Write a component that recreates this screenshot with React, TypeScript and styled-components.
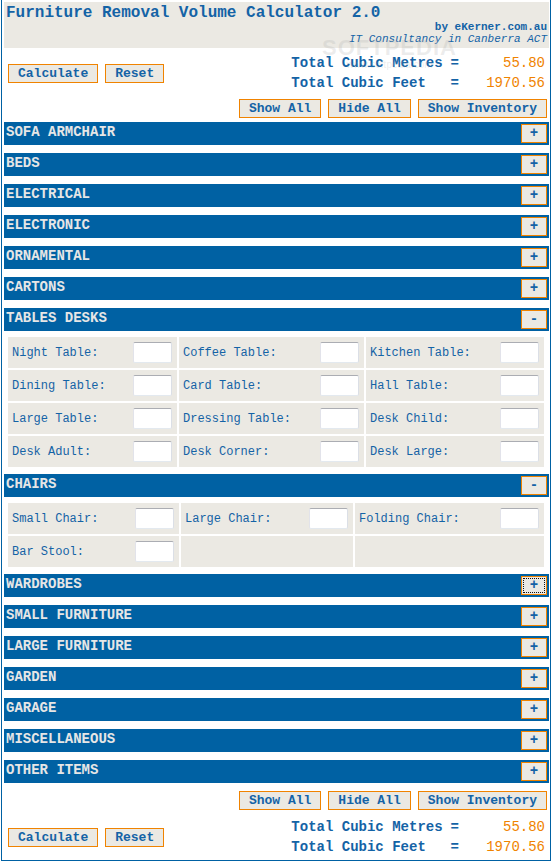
import React, { useState } from 'react'
import styled, { createGlobalStyle } from 'styled-components'

const BLUE = '#0061a3'
const TEXT = '#1463a6'
const PANEL = '#ebe9e3'
const ORANGE = '#f08300'

const GlobalStyle = createGlobalStyle`
  html, body {
    margin: 0;
    padding: 0;
    background: #fff;
  }
  body {
    font-family: "Liberation Mono", "DejaVu Sans Mono", monospace;
  }
`

interface Section {
  name: string
  open?: boolean
  focused?: boolean
  columns?: string
  items?: string[]
}

const sections: Section[] = [
  { name: 'SOFA ARMCHAIR' },
  { name: 'BEDS' },
  { name: 'ELECTRICAL' },
  { name: 'ELECTRONIC' },
  { name: 'ORNAMENTAL' },
  { name: 'CARTONS' },
  {
    name: 'TABLES DESKS',
    open: true,
    columns: '169px 185px 178px',
    items: [
      'Night Table:', 'Coffee Table:', 'Kitchen Table:',
      'Dining Table:', 'Card Table:', 'Hall Table:',
      'Large Table:', 'Dressing Table:', 'Desk Child:',
      'Desk Adult:', 'Desk Corner:', 'Desk Large:',
    ],
  },
  {
    name: 'CHAIRS',
    open: true,
    columns: '171px 172px 189px',
    items: ['Small Chair:', 'Large Chair:', 'Folding Chair:', 'Bar Stool:'],
  },
  { name: 'WARDROBES', focused: true },
  { name: 'SMALL FURNITURE' },
  { name: 'LARGE FURNITURE' },
  { name: 'GARDEN' },
  { name: 'GARAGE' },
  { name: 'MISCELLANEOUS' },
  { name: 'OTHER ITEMS' },
]

const Frame = styled.div`
  position: relative;
  width: 550px;
  margin-left: 1px;
  box-sizing: border-box;
  border: 1px solid ${BLUE};
  border-top: none;
  padding: 2px 1px 2px 2px;
`

const Header = styled.div`
  background: ${PANEL};
  padding: 3px 2px 2px 2px;
  height: 46px;
  box-sizing: border-box;
  color: ${TEXT};
`

const Title = styled.h1`
  margin: 0;
  font-size: 16px;
  line-height: 16px;
  font-weight: bold;
`

const Byline = styled.div<{ $italic?: boolean }>`
  text-align: right;
  font-size: 11px;
  line-height: ${(p) => (p.$italic ? '13px' : '12px')};
  font-weight: ${(p) => (p.$italic ? 'normal' : 'bold')};
  font-style: ${(p) => (p.$italic ? 'italic' : 'normal')};
`

// faint watermark laid over the header corner
const Watermark = styled.div`
  position: absolute;
  top: 37px;
  left: 320px;
  text-align: center;
  color: rgba(170, 170, 170, 0.22);
  font-family: "Liberation Sans", Arial, sans-serif;
  pointer-events: none;
`

const WatermarkBig = styled.div`
  font-size: 22px;
  line-height: 22px;
  font-weight: bold;
  letter-spacing: 1px;
`

const WatermarkSmall = styled.div`
  font-size: 10px;
  line-height: 12px;
`

const Summary = styled.div<{ $top: number; $bottom: number }>`
  display: flex;
  justify-content: space-between;
  align-items: center;
  padding: 0 4px;
  margin-top: ${(p) => p.$top}px;
  margin-bottom: ${(p) => p.$bottom}px;
`

const ButtonGroup = styled.div`
  display: flex;
  gap: 7px;
`

const Toolbar = styled.div<{ $top: number; $bottom: number }>`
  display: flex;
  justify-content: flex-end;
  gap: 7px;
  padding-right: 2px;
  margin-top: ${(p) => p.$top}px;
  margin-bottom: ${(p) => p.$bottom}px;
`

const Button = styled.button`
  height: 19px;
  padding: 0 9px;
  margin: 0;
  background: ${PANEL};
  border: 1px solid ${ORANGE};
  border-radius: 0;
  color: ${TEXT};
  font-family: "Liberation Mono", monospace;
  font-size: 13px;
  line-height: 17px;
  font-weight: bold;
  cursor: pointer;
`

const Totals = styled.div`
  display: grid;
  grid-template-columns: auto auto 78px;
  column-gap: 8px;
  grid-auto-rows: 20px;
  align-items: center;
  font-size: 14px;
  font-weight: bold;
  color: ${TEXT};
`

const Value = styled.span`
  text-align: right;
  color: ${ORANGE};
  font-weight: normal;
`

const SectionBlock = styled.div<{ $open: boolean }>`
  margin-bottom: ${(p) => (p.$open ? 7 : 8)}px;
`

const Bar = styled.div`
  height: 23px;
  box-sizing: border-box;
  background: ${BLUE};
  display: flex;
  justify-content: space-between;
  align-items: flex-start;
  padding: 0 2px 0 2px;
`

const BarTitle = styled.span`
  color: #e6e6e6;
  font-size: 14px;
  line-height: 20px;
  font-weight: bold;
`

const Toggle = styled.button<{ $focused?: boolean }>`
  width: 26px;
  height: 19px;
  margin-top: 2px;
  padding: 0;
  background: ${PANEL};
  border: 1px solid ${ORANGE};
  border-radius: 0;
  color: ${TEXT};
  font-family: "Liberation Mono", monospace;
  font-size: 14px;
  line-height: 17px;
  font-weight: bold;
  cursor: pointer;
  outline: ${(p) => (p.$focused ? '1px dotted #111' : 'none')};
  outline-offset: -3px;
`

const Body = styled.div`
  padding: 6px 4px 0 4px;
`

const Grid = styled.div<{ $columns: string }>`
  display: grid;
  grid-template-columns: ${(p) => p.$columns};
  gap: 2px;
`

const Cell = styled.div`
  height: 31px;
  box-sizing: border-box;
  background: ${PANEL};
  display: flex;
  align-items: center;
  justify-content: space-between;
  padding: 0 5px 0 4px;
`

const Label = styled.label`
  font-size: 12px;
  color: ${TEXT};
  white-space: pre;
`

const Qty = styled.input`
  width: 39px;
  height: 21px;
  box-sizing: border-box;
  margin: 0;
  padding: 0 2px;
  border: 1px solid;
  border-color: #abadb3 #dbdfe6 #e3e9ef #e2e3ea;
  border-radius: 2px;
  background: #fff;
  font-family: "Liberation Mono", monospace;
  font-size: 12px;
  color: ${TEXT};
  text-align: right;
`

const SummaryBlock: React.FC<{ top: number; bottom: number }> = ({ top, bottom }) => (
  <Summary $top={top} $bottom={bottom}>
    <ButtonGroup>
      <Button>Calculate</Button>
      <Button>Reset</Button>
    </ButtonGroup>
    <Totals>
      <span>Total Cubic Metres</span>
      <span>=</span>
      <Value>55.80</Value>
      <span>Total Cubic Feet</span>
      <span>=</span>
      <Value>1970.56</Value>
    </Totals>
  </Summary>
)

const ViewButtons: React.FC<{ top: number; bottom: number; onShow: () => void; onHide: () => void }> = ({
  top,
  bottom,
  onShow,
  onHide,
}) => (
  <Toolbar $top={top} $bottom={bottom}>
    <Button onClick={onShow}>Show All</Button>
    <Button onClick={onHide}>Hide All</Button>
    <Button>Show Inventory</Button>
  </Toolbar>
)

export default function App() {
  const [open, setOpen] = useState<Record<string, boolean>>(() =>
    Object.fromEntries(sections.map((s) => [s.name, !!s.open]))
  )

  const setAll = (value: boolean) =>
    setOpen(Object.fromEntries(sections.map((s) => [s.name, value])))

  return (
    <>
      <GlobalStyle />
      <Frame>
        <Header>
          <Title>Furniture Removal Volume Calculator 2.0</Title>
          <Byline>by eKerner.com.au</Byline>
          <Byline $italic>IT Consultancy in Canberra ACT</Byline>
        </Header>
        <Watermark>
          <WatermarkBig>SOFTPEDIA</WatermarkBig>
          <WatermarkSmall>www.softpedia.com</WatermarkSmall>
        </Watermark>

        <SummaryBlock top={5} bottom={0} />
        <ViewButtons top={6} bottom={4} onShow={() => setAll(true)} onHide={() => setAll(false)} />

        {sections.map((s) => {
          const isOpen = open[s.name] && !!s.items
          const items = s.items ?? []
          const blanks = (3 - (items.length % 3)) % 3
          return (
            <SectionBlock key={s.name} $open={isOpen}>
              <Bar>
                <BarTitle>{s.name}</BarTitle>
                <Toggle
                  $focused={s.focused}
                  onClick={() => setOpen({ ...open, [s.name]: !open[s.name] })}
                >
                  {isOpen ? '-' : '+'}
                </Toggle>
              </Bar>
              {isOpen && (
                <Body>
                  <Grid $columns={s.columns ?? '1fr 1fr 1fr'}>
                    {items.map((label) => (
                      <Cell key={label}>
                        <Label>{label}</Label>
                        <Qty type="text" />
                      </Cell>
                    ))}
                    {Array.from({ length: blanks }).map((_, i) => (
                      <Cell key={`blank-${i}`} />
                    ))}
                  </Grid>
                </Body>
              )}
            </SectionBlock>
          )
        })}

        <ViewButtons top={5} bottom={0} onShow={() => setAll(true)} onHide={() => setAll(false)} />
        <SummaryBlock top={7} bottom={1} />
      </Frame>
    </>
  )
}
